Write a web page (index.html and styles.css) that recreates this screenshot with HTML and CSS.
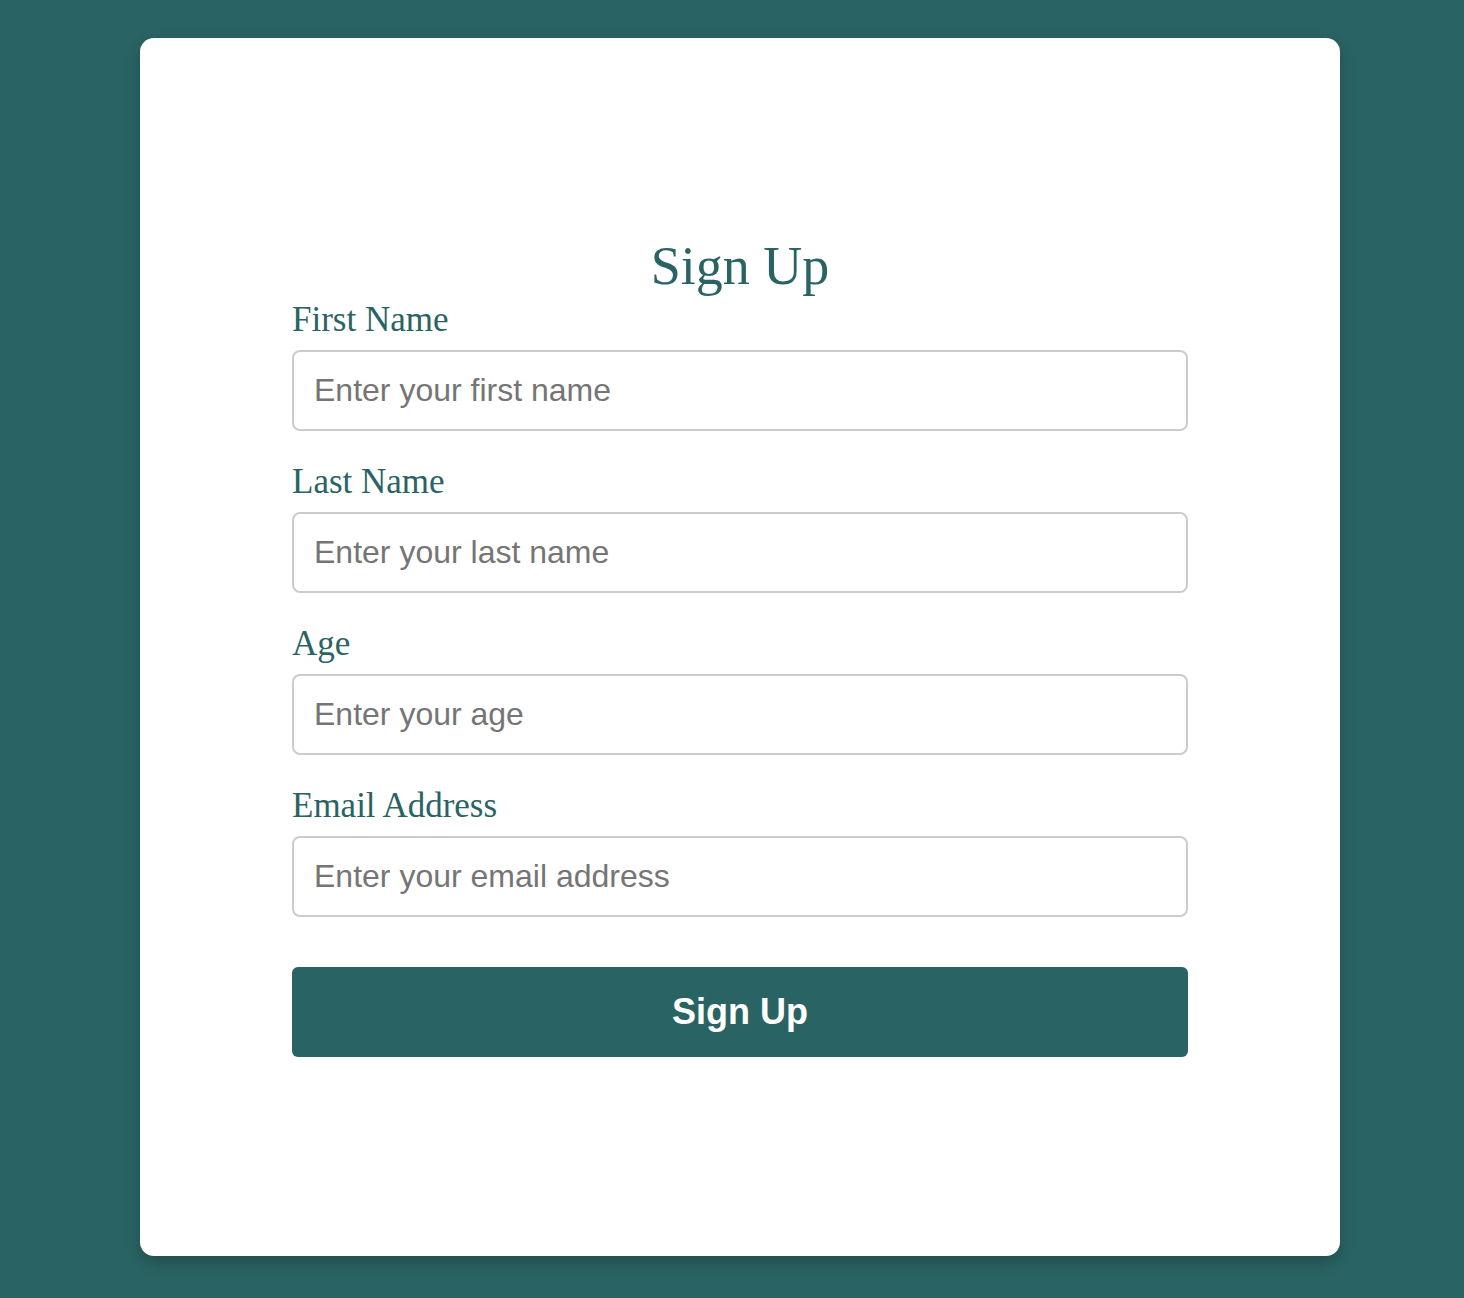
FILE: index.html
```html
<!DOCTYPE html>
<html lang="en">
<head>
<meta charset="utf-8">
<title>Sign Up</title>
<link rel="stylesheet" href="styles.css">
</head>
<body>
<main class="card">
  <form class="signup">
    <h1 class="title">Sign Up</h1>
    <div class="field">
      <label class="label" for="first">First Name</label>
      <input class="input" id="first" type="text" placeholder="Enter your first name">
    </div>
    <div class="field">
      <label class="label" for="last">Last Name</label>
      <input class="input" id="last" type="text" placeholder="Enter your last name">
    </div>
    <div class="field">
      <label class="label" for="age">Age</label>
      <input class="input" id="age" type="text" placeholder="Enter your age">
    </div>
    <div class="field">
      <label class="label" for="email">Email Address</label>
      <input class="input" id="email" type="text" placeholder="Enter your email address">
    </div>
    <button class="submit" type="button">Sign Up</button>
  </form>
</main>
</body>
</html>
```

FILE: styles.css
```css
* { box-sizing: border-box; }

html, body {
  margin: 0;
  padding: 0;
}

body {
  background: #2a6363;
  min-height: 1298px;
  padding: 38px 124px 42px 140px;
}

.card {
  width: 1200px;
  height: 1218px;
  padding-bottom: 2px;
  background: #ffffff;
  border-radius: 14px;
  box-shadow: 0 6px 14px rgba(0, 0, 0, 0.22);
  display: flex;
  align-items: center;
  justify-content: center;
}

.signup {
  width: 896px;
  display: flex;
  flex-direction: column;
  gap: 31px;
}

.title {
  margin: 0 0 -27px 0;
  font-family: "Liberation Serif", "Times New Roman", serif;
  font-weight: 400;
  font-size: 54px;
  line-height: 60px;
  color: #2a6363;
  text-align: center;
}

.field {
  display: flex;
  flex-direction: column;
  gap: 10px;
}

.label {
  font-family: "Liberation Serif", "Times New Roman", serif;
  font-size: 35px;
  line-height: 40px;
  color: #2a6363;
}

.input {
  width: 100%;
  height: 81px;
  padding: 0 20px;
  border: 2px solid #cccccc;
  border-radius: 8px;
  font-family: "Liberation Sans", Arial, sans-serif;
  font-size: 32px;
  color: #333;
  background: #fff;
  outline: none;
}

.input::placeholder {
  color: #757575;
  opacity: 1;
}

.submit {
  margin-top: 19px;
  width: 100%;
  height: 90px;
  border: none;
  border-radius: 6px;
  background: #2a6363;
  color: #ffffff;
  font-family: "Liberation Sans", Arial, sans-serif;
  font-weight: 700;
  font-size: 36px;
  cursor: pointer;
}
```
